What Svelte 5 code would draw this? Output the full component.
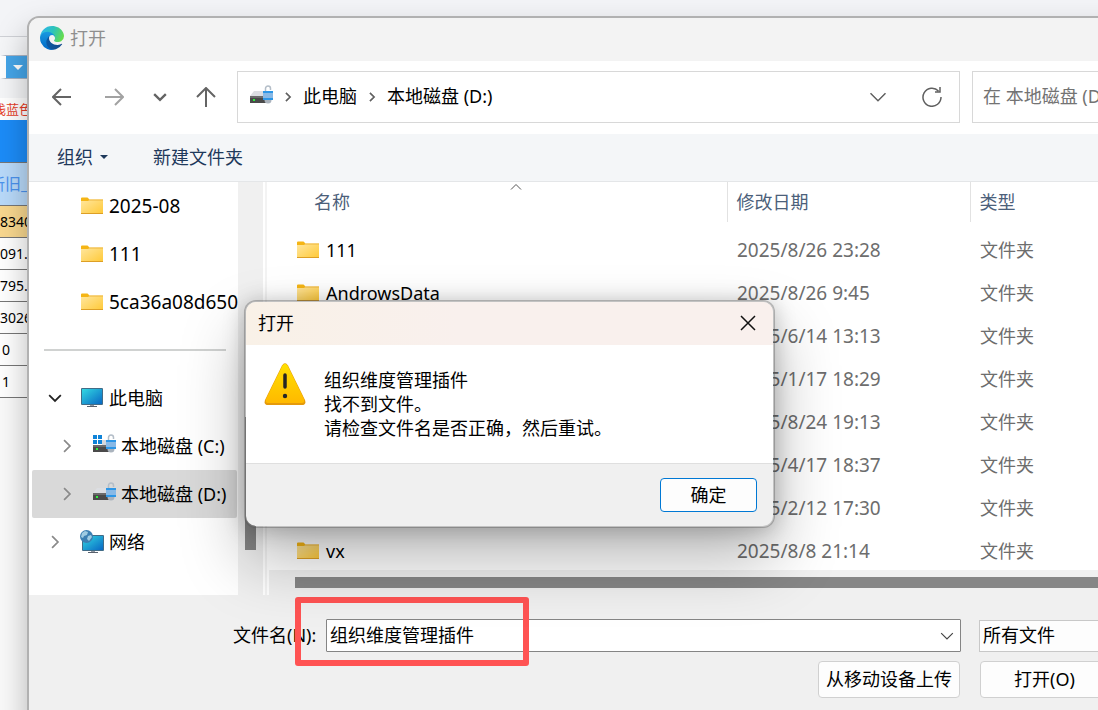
<script>
	let filename = $state('组织维度管理插件');
	let filter = $state('所有文件');

	const gridRows = ['8340', '091.3', '795.2', '3026', '0', '1'];

	const tree = [
		{ label: '2025-08', icon: 'folder' },
		{ label: '111', icon: 'folder' },
		{ label: '5ca36a08d650', icon: 'folder' },
		{ divider: true },
		{ label: '此电脑', icon: 'pc', arrow: 'down' },
		{ label: '本地磁盘 (C:)', icon: 'system', arrow: 'right', nested: true },
		{ label: '本地磁盘 (D:)', icon: 'drive', arrow: 'right', nested: true, selected: true },
		{ label: '网络', icon: 'network', arrow: 'right' }
	];

	const files = [
		{ name: '111', date: '2025/8/26 23:28' },
		{ name: 'AndrowsData', date: '2025/8/26 9:45' },
		{ name: '', date: '2025/6/14 13:13' },
		{ name: '', date: '2025/1/17 18:29' },
		{ name: '', date: '2025/8/24 19:13' },
		{ name: '', date: '2025/4/17 18:37' },
		{ name: '', date: '2025/2/12 17:30' },
		{ name: 'vx', date: '2025/8/8 21:14' }
	];
</script>

{#snippet folder()}
	<svg class="icon" viewBox="0 0 24 24" width="24" height="24">
		<path d="M1 4.5a1 1 0 0 1 1-1h5.5l2 2V8H1z" fill="#f5b515" />
		<path d="M1 7h7l2-1.500h13V20H1z" fill="url(#folder-fill)" />
		<path d="M8 6.500l1.500-1H23v1z" fill="#eeb63f" />
		<path d="M1 19h22v1H1z" fill="#dd9f25" />
	</svg>
{/snippet}

{#snippet drive(system)}
	<svg class="icon" viewBox="0 0 24 24" width="24" height="24">
		{#if system}
			<path d="M1 1h4v4H1zM6 1h4v4H6zM1 6h4v4H1zM6 6h4v4H6z" fill="#0f83d8" />
			<path d="M10 6h5v5h-5z" fill="#d5d8dc" />
		{:else}
			<path d="M5 6h10v5H1z" fill="#dcdee2" />
		{/if}
		<rect x="1" y="11" width="19" height="7" fill="#4a4a4a" />
		<rect x="1" y="11" width="19" height="2" fill="#6b6b6b" />
		<rect x="4" y="14" width="2" height="2" fill="#2df03c" />
		<path d="M16.500 7V3.500a2.500 2.500 0 0 1 5 0V5" fill="none" stroke="#b4bec8" stroke-width="1.500" />
		<circle cx="19" cy="15" r="3.500" fill="#aab3bd" />
		<rect x="14" y="6" width="10" height="9" rx="1" fill="#88b9e6" />
		<path d="M14 6h10v2H14zM14 13h10v2H14z" fill="#2d96e6" />
	</svg>
{/snippet}

{#snippet monitor()}
	<svg class="icon" viewBox="0 0 24 24" width="24" height="24">
		<path d="M10 18h4v3h-4z" fill="#9299a3" />
		<path d="M7 20h10v1H7z" fill="#59616d" />
		<rect x="1" y="2" width="22" height="17" rx="1" fill="#426c87" />
		<rect x="2" y="3" width="20" height="15" fill="url(#screen-fill)" />
	</svg>
{/snippet}

{#snippet network()}
	<svg class="icon" viewBox="0 0 24 24" width="24" height="24">
		<path d="M11 20h4v3h-4z" fill="#9299a3" />
		<path d="M8 22h10v1H8z" fill="#59616d" />
		<rect x="2" y="5" width="22" height="16" rx="1" fill="#426c87" />
		<rect x="3" y="6" width="20" height="14" fill="url(#screen-fill)" />
		<circle cx="6.500" cy="6.500" r="6.500" fill="#3c7fb2" />
		<path d="M2 3l3-2 3 1-1 3-3 1-1 2-2-1zM8 6l3-1 1 2-3 4-2-2z" fill="#9fcbe2" />
	</svg>
{/snippet}

{#snippet chevron(size, dir, width)}
	<svg class="chevron {dir}" viewBox="0 0 12 12" width={size} height={size}>
		<path d="M1 3.500l5 5 5-5" stroke-width={width} />
	</svg>
{/snippet}

<svg class="defs" width="0" height="0" aria-hidden="true">
	<defs>
		<linearGradient id="folder-fill" x1="0" y1="0" x2="1" y2="1">
			<stop offset="0" stop-color="#ffe7a0" />
			<stop offset="1" stop-color="#ffc937" />
		</linearGradient>
		<linearGradient id="screen-fill" x1="0" y1="0" x2="1" y2="1">
			<stop offset="0" stop-color="#32d8e2" />
			<stop offset="1" stop-color="#0968c4" />
		</linearGradient>
		<linearGradient id="edge-deep" x1="0" y1="0" x2="1" y2="0">
			<stop offset="0" stop-color="#0c59a4" />
			<stop offset="1" stop-color="#114a8b" />
		</linearGradient>
		<linearGradient id="edge-blue" x1="0" y1="0" x2="0" y2="1">
			<stop offset="0" stop-color="#1b9de2" />
			<stop offset="1" stop-color="#0067c5" />
		</linearGradient>
		<linearGradient id="edge-green" x1="0" y1="0.300" x2="1" y2="0.600">
			<stop offset="0" stop-color="#2fb7ec" />
			<stop offset="0.500" stop-color="#2dc3ba" />
			<stop offset="1" stop-color="#68dd48" />
		</linearGradient>
		<linearGradient id="warn-fill" x1="0" y1="0" x2="0" y2="1">
			<stop offset="0" stop-color="#ffe000" />
			<stop offset="1" stop-color="#ffb900" />
		</linearGradient>
	</defs>
</svg>

<div class="desktop">
	<!-- Page behind the file picker -->
	<div class="backdrop">
		<div class="browser-top"></div>
		<div class="filters">
			<div class="mini-select"><span></span></div>
		</div>
		<div class="hint">浅蓝色</div>
		<div class="grid-title"></div>
		<div class="grid-head">新旧_分</div>
		{#each gridRows as row, i}
			<div class="grid-row" class:short={i > 3} class:marked={i === 0}>{row}</div>
		{/each}
	</div>

	<section class="window">
		<header class="titlebar">
			<svg viewBox="0 0 256 256" width="24" height="24">
				<path fill="url(#edge-deep)" d="M231.070 190.540a93.420 93.420 0 0 1-10.540 4.710 101.870 101.870 0 0 1-35.900 6.460c-47.320 0-88.540-32.550-88.540-74.320A31.480 31.480 0 0 1 112.520 99.880c-42.800 1.800-53.800 46.400-53.800 72.530 0 73.880 68.090 81.370 82.760 81.370 7.910 0 19.840-2.300 27-4.560l1.310-.440a128.340 128.340 0 0 0 66.600-52.800 4 4 0 0 0-5.320-5.440z" />
				<path fill="url(#edge-blue)" d="M105.730 241.420a79.200 79.200 0 0 1-22.740-21.340 80.720 80.720 0 0 1 29.530-120.400c3.120-1.470 8.450-4.130 15.540-4a32.350 32.350 0 0 1 25.690 13 31.880 31.880 0 0 1 6.360 18.660c0-.210 24.460-79.600-80-79.600-43.900 0-80 41.660-80 78.210a130.150 130.150 0 0 0 12.110 56 128 128 0 0 0 156.380 67.110 75.550 75.550 0 0 1-62.780-8z" />
				<path fill="url(#edge-green)" d="M152.330 149.250c-.810 1.050-3.300 2.500-3.300 5.660 0 2.610 1.700 5.120 4.720 7.230 14.380 10 41.490 8.680 41.560 8.680a59.560 59.560 0 0 0 30.270-8.350A61.380 61.380 0 0 0 256 109.640c.260-22.410-8-37.310-11.340-43.910C223.460 24.280 177.720.450 128 .450a128 128 0 0 0-128 126.200c.480-36.540 36.800-66.050 80-66.050 3.500 0 23.460.340 42 10.070 16.340 8.580 24.900 18.940 30.850 29.210 6.180 10.670 7.280 24.150 7.280 29.520s-2.740 13.330-7.800 19.850z" />
			</svg>
			<span>打开</span>
		</header>

		<nav class="navbar">
			<div class="history">
				<button aria-label="后退">
					<svg viewBox="0 0 20 20" width="20" height="20"><path d="M19 10H2M9 2l-8 8 8 8" /></svg>
				</button>
				<button aria-label="前进" class="dim">
					<svg viewBox="0 0 20 20" width="20" height="20"><path d="M1 10h17M11 2l8 8-8 8" /></svg>
				</button>
				<button aria-label="最近位置">{@render chevron(14, 'down', 2)}</button>
				<button aria-label="上移">
					<svg viewBox="0 0 20 20" width="20" height="20"><path d="M10 20V2M1 10l9-9 9 9" /></svg>
				</button>
			</div>
			<div class="address">
				{@render drive(false)}
				{@render chevron(10, 'right', 2)}
				<button class="crumb">此电脑</button>
				{@render chevron(10, 'right', 2)}
				<button class="crumb">本地磁盘 (D:)</button>
				<button class="address-tool first" aria-label="展开">{@render chevron(18, 'down', 1)}</button>
				<button class="address-tool refresh" aria-label="刷新">
					<svg viewBox="0 0 20 20" width="20" height="20">
						<path d="M16.500 4A9 9 0 1 0 19 10M18 0v5h-5" />
					</svg>
				</button>
			</div>
			<input class="search" type="text" aria-label="搜索" placeholder="在 本地磁盘 (D:) 中搜索" />
		</nav>

		<div class="toolbar">
			<button>组织 <i class="caret"></i></button>
			<button>新建文件夹</button>
		</div>

		<div class="content">
			<aside class="tree">
				{#each tree as item}
					{#if item.divider}
						<div class="tree-divider"><hr /></div>
					{:else}
						<button class="tree-item" class:nested={item.nested} class:selected={item.selected}>
							<span class="twisty" class:open={item.arrow === 'down'}>
								{#if item.arrow}{@render chevron(14, item.arrow, 1.5)}{/if}
							</span>
							{#if item.icon === 'folder'}
								{@render folder()}
							{:else if item.icon === 'pc'}
								{@render monitor()}
							{:else if item.icon === 'network'}
								{@render network()}
							{:else}
								{@render drive(item.icon === 'system')}
							{/if}
							<span class:latin={item.icon === 'folder'}>{item.label}</span>
						</button>
					{/if}
				{/each}
			</aside>
			<div class="tree-scroll"><div class="thumb"></div></div>
			<div class="splitter"></div>
			<div class="listing">
				<div class="table-wrap">
					<div class="sort">{@render chevron(12, 'up', 1)}</div>
					<table>
						<colgroup>
							<col />
							<col class="col-date" />
							<col class="col-type" />
						</colgroup>
						<thead>
							<tr>
								<th>名称</th>
								<th>修改日期</th>
								<th>类型</th>
							</tr>
						</thead>
						<tbody>
							{#each files as file}
								<tr>
									<td><div class="file-name">{@render folder()}<span>{file.name}</span></div></td>
									<td class="date">{file.date}</td>
									<td class="type">文件夹</td>
								</tr>
							{/each}
						</tbody>
					</table>
				</div>
				<div class="list-scroll"><div class="thumb"></div></div>
			</div>
		</div>

		<form class="footer" onsubmit={(e) => e.preventDefault()}>
			<div class="fields">
				<label for="filename">文件名(N):</label>
				<div class="combo">
					<input id="filename" type="text" bind:value={filename} />
					<button type="button" aria-label="历史文件名">{@render chevron(14, 'down', 1)}</button>
				</div>
				<select aria-label="文件类型" bind:value={filter}>
					<option>所有文件</option>
				</select>
			</div>
			<div class="actions">
				<button type="button" class="upload">从移动设备上传</button>
				<button type="submit" class="open">打开(O)</button>
			</div>
		</form>
	</section>

	<div class="highlight"></div>

	<div class="dialog" role="alertdialog" aria-labelledby="dialog-title">
		<header>
			<span id="dialog-title">打开</span>
			<button aria-label="关闭">
				<svg viewBox="0 0 16 16" width="16" height="16"><path d="M1 1l14 14M15 1L1 15" /></svg>
			</button>
		</header>
		<div class="dialog-body">
			<svg viewBox="0 0 42 44" width="42" height="44">
				<path d="M18 3.500Q21-1 24 3.500L41 38q1.500 5-3 5H4q-4.500 0-3-5z" fill="#e59a0b" />
				<path d="M18.500 3.500Q21 0 23.500 3.500L40 37q1 4-2 4H4q-3 0-2-4z" fill="url(#warn-fill)" />
				<path d="M21 13v12" stroke="#252525" stroke-width="3.500" stroke-linecap="round" />
				<circle cx="21" cy="34" r="2.200" fill="#252525" />
			</svg>
			<p>
				组织维度管理插件<br />
				找不到文件。<br />
				请检查文件名是否正确，然后重试。
			</p>
		</div>
		<footer>
			<button>确定</button>
		</footer>
	</div>
</div>

<style>
	:global(body) {
		margin: 0;
		overflow: hidden;
	}

	.desktop {
		position: relative;
		height: 100vh;
		overflow: hidden;
		background: #fafafa;
		color: #000;
		font-family: 'Noto Sans', 'Noto Sans CJK SC', sans-serif;
		font-size: 18px;
		line-height: 24px;
	}

	.desktop * {
		box-sizing: border-box;
	}

	button,
	input,
	select {
		margin: 0;
		padding: 0;
		border: 0;
		background: none;
		color: inherit;
		font: inherit;
	}

	svg {
		display: block;
		flex: none;
	}

	.defs {
		position: absolute;
	}

	.chevron path,
	.history path,
	.address-tool path {
		fill: none;
		stroke: currentColor;
	}

	.chevron.right {
		transform: rotate(-90deg);
	}

	.chevron.up {
		transform: rotate(180deg);
	}

	/* page behind */
	.backdrop {
		font-size: 14px;
		line-height: 20px;
		white-space: nowrap;
	}

	.browser-top {
		height: 37px;
		background: #f3f4f7;
		border-bottom: 1px solid #cfd1d6;
	}

	.filters {
		height: 61px;
		padding-top: 18px;
		background: #f5f6f8;
	}

	.mini-select {
		display: flex;
		align-items: center;
		justify-content: center;
		width: 30px;
		height: 24px;
		border: 1px solid #a9b4c4;
		border-left: 6px solid #fff;
		background: #45a5e8;
	}

	.mini-select span {
		border: 5px solid transparent;
		border-top-color: #fff;
		border-bottom: 0;
	}

	.hint {
		height: 22px;
		width: 32px;
		display: flex;
		justify-content: flex-end;
		overflow: hidden;
		background: #fff;
		color: #e63c28;
		font-size: 13px;
		line-height: 22px;
	}

	.grid-title {
		height: 43px;
		background: #1c8cf8;
		border-bottom: 1px solid #777;
	}

	.grid-head {
		height: 43px;
		width: 44px;
		display: flex;
		justify-content: flex-end;
		overflow: hidden;
		background: #b9dafa;
		border-bottom: 1px solid #777;
		color: #4b93ee;
		font-size: 16px;
		line-height: 42px;
	}

	.grid-row {
		height: 32px;
		width: 38px;
		border-bottom: 1px solid #777;
		background: #fff;
		line-height: 32px;
	}

	.grid-row.marked {
		background: #f9d88f;
	}

	.grid-row.short {
		padding-left: 2px;
	}

	/* file picker window */
	.window {
		position: absolute;
		top: 16px;
		right: -33px;
		bottom: -20px;
		left: 27px;
		display: flex;
		flex-direction: column;
		overflow: hidden;
		border: 2px solid #b1b1b1;
		border-radius: 12px;
		background: #f0f0f0;
		box-shadow: 0 16px 32px rgba(0, 0, 0, 0.28);
	}

	.titlebar {
		flex: none;
		display: flex;
		align-items: center;
		gap: 6px;
		height: 43px;
		padding: 0 0 4px 11px;
		background: #f3f3f3;
		color: #8e8e8e;
	}

	.navbar {
		flex: none;
		display: flex;
		align-items: center;
		height: 73px;
		padding: 0 20px 2px 0;
		background: #fff;
	}

	.history {
		display: flex;
		width: 208px;
		padding-left: 11px;
	}

	.history button {
		display: flex;
		align-items: center;
		justify-content: center;
		width: 44px;
		height: 44px;
		color: #646464;
	}

	.history button.dim {
		margin: 0 2px 0 8px;
		color: #a2a2a2;
	}

	.history path {
		stroke-width: 2;
	}

	.history button:last-child {
		margin-left: 2px;
	}

	.address {
		flex: 1;
		display: flex;
		align-items: center;
		gap: 10px;
		height: 52px;
		padding: 0 16px 0 11px;
		border: 1px solid #d8d8d8;
		color: #606060;
	}

	.crumb {
		padding-bottom: 2px;
		color: #000;
	}

	.address-tool {
		display: flex;
		align-items: center;
		justify-content: center;
		width: 22px;
		height: 32px;
	}

	.address-tool.first {
		margin: 0 22px 0 auto;
	}

	.refresh path {
		stroke-width: 1.5;
	}

	.search {
		width: 137px;
		height: 52px;
		margin-left: 12px;
		padding: 0 0 2px 10px;
		border: 1px solid #d8d8d8;
	}

	.search::placeholder {
		color: #737373;
		opacity: 1;
	}

	.toolbar {
		flex: none;
		display: flex;
		align-items: center;
		gap: 45px;
		height: 48px;
		padding: 0 0 2px 28px;
		border-bottom: 1px solid #e4e6e8;
		background: #f4f6f8;
		color: #1e395b;
	}

	.toolbar button {
		display: flex;
		align-items: center;
		gap: 7px;
	}

	.caret {
		border: 4px solid transparent;
		border-top-color: currentColor;
		border-bottom: 0;
	}

	.content {
		flex: none;
		display: flex;
		height: 413px;
	}

	.tree {
		flex: none;
		width: 209px;
		overflow: hidden;
		background: #fff;
	}

	.tree-item {
		display: flex;
		align-items: center;
		gap: 5px;
		width: 205px;
		height: 48px;
		margin-left: 3px;
		padding-left: 16px;
		border-radius: 2px;
		white-space: nowrap;
	}

	.tree-item.nested {
		padding-left: 28px;
	}

	.tree-item.selected {
		background: #d9d9d9;
	}

	.twisty {
		flex: none;
		width: 27px;
		color: #8a8a8a;
	}

	.twisty.open {
		color: #222;
	}

	.latin,
	.date {
		font-size: 19px;
	}

	.tree-divider {
		display: flex;
		align-items: center;
		height: 48px;
		padding: 0 12px 0 15px;
	}

	.tree-divider hr {
		width: 100%;
		height: 2px;
		margin: 0;
		border: 0;
		background: #d0d2d1;
	}

	.tree-scroll {
		flex: none;
		display: flex;
		align-items: flex-end;
		justify-content: center;
		width: 25px;
		padding-bottom: 45px;
	}

	.thumb {
		background: #868686;
	}

	.tree-scroll .thumb {
		width: 11px;
		height: 133px;
	}

	.splitter {
		flex: none;
		width: 6px;
		border: solid #fff;
		border-width: 0 2px;
		background: #f3f3f3;
	}

	.listing {
		flex: 1;
		min-width: 0;
	}

	.table-wrap {
		position: relative;
		height: 388px;
		overflow: hidden;
		background: #fff;
	}

	/* sort arrow sits over the name column's heading */
	.sort {
		position: absolute;
		top: -1px;
		left: 241px;
		color: #555;
	}

	table {
		width: 100%;
		table-layout: fixed;
		border-collapse: collapse;
	}

	.col-date {
		width: 243px;
	}

	.col-type {
		width: 159px;
	}

	th {
		height: 40px;
		padding: 0 9px;
		color: #4c607a;
		font-weight: 400;
		text-align: left;
	}

	th:first-child {
		padding-left: 45px;
	}

	th + th {
		border-left: 1px solid #e2e2e2;
	}

	tbody::before {
		content: '';
		display: block;
		height: 6px;
	}

	td {
		height: 43px;
		padding: 0 10px;
		color: #6d6d6d;
		white-space: nowrap;
	}

	td:first-child {
		padding-left: 27px;
		color: #000;
	}

	.file-name {
		display: flex;
		align-items: center;
		gap: 6px;
	}

	.list-scroll {
		padding: 7px 0 7px 26px;
	}

	.list-scroll .thumb {
		height: 11px;
	}

	.footer {
		display: flex;
		flex-direction: column;
		gap: 9px;
		padding: 24px 20px 0 204px;
	}

	.fields {
		display: flex;
		align-items: center;
	}

	.fields label {
		width: 93px;
		padding-bottom: 2px;
	}

	.combo {
		flex: 1;
		display: flex;
		height: 33px;
		border: 1px solid #858585;
		border-radius: 1px;
		background: #fff;
	}

	.combo input {
		flex: 1;
		min-width: 0;
		padding: 0 0 2px 3px;
		outline: none;
	}

	.combo button {
		display: flex;
		align-items: center;
		justify-content: center;
		width: 26px;
		color: #444;
	}

	select {
		width: 130px;
		height: 32px;
		margin-left: 18px;
		padding: 0 0 2px 3px;
		border: 1px solid #c8c8c8;
		background: #fdfdfd;
		appearance: none;
	}

	.actions {
		display: flex;
		justify-content: flex-end;
		gap: 20px;
	}

	.actions button {
		height: 37px;
		padding-bottom: 2px;
		border: 1px solid #d0d0d0;
		border-radius: 4px;
		background: #fdfdfd;
	}

	.actions .upload {
		width: 142px;
	}

	.actions .open {
		width: 129px;
	}

	/* red marker drawn round the file name */
	.highlight {
		position: absolute;
		top: 597px;
		left: 295px;
		width: 234px;
		height: 69px;
		border: 6px solid #ff5353;
		border-radius: 3px;
	}

	/* error message */
	.dialog {
		position: absolute;
		top: 300px;
		left: 244px;
		width: 531px;
		overflow: hidden;
		border: 2px solid rgba(80, 80, 80, 0.35);
		border-radius: 12px;
		background: #f0f0f0;
		background-clip: padding-box;
		box-shadow:
			0 32px 64px rgba(0, 0, 0, 0.28),
			0 2px 21px rgba(0, 0, 0, 0.22);
	}

	.dialog header {
		display: flex;
		align-items: center;
		justify-content: space-between;
		height: 43px;
		padding: 0 17px 2px 12px;
		background: linear-gradient(90deg, #f9f1e7, #f9f0ed 40%);
	}

	.dialog header path {
		stroke: #111;
		stroke-width: 1.500;
	}

	.dialog-body {
		display: flex;
		gap: 18px;
		height: 118px;
		padding: 17px 17px 0 18px;
		background: #fff;
	}

	.dialog-body p {
		margin: 6px 0 0;
	}

	.dialog footer {
		display: flex;
		justify-content: flex-end;
		padding: 14px 16px;
		border-top: 1px solid #dfdfdf;
	}

	.dialog footer button {
		width: 97px;
		height: 34px;
		border: 1px solid #0078d4;
		border-radius: 4px;
		background: #fdfdfd;
	}
</style>
